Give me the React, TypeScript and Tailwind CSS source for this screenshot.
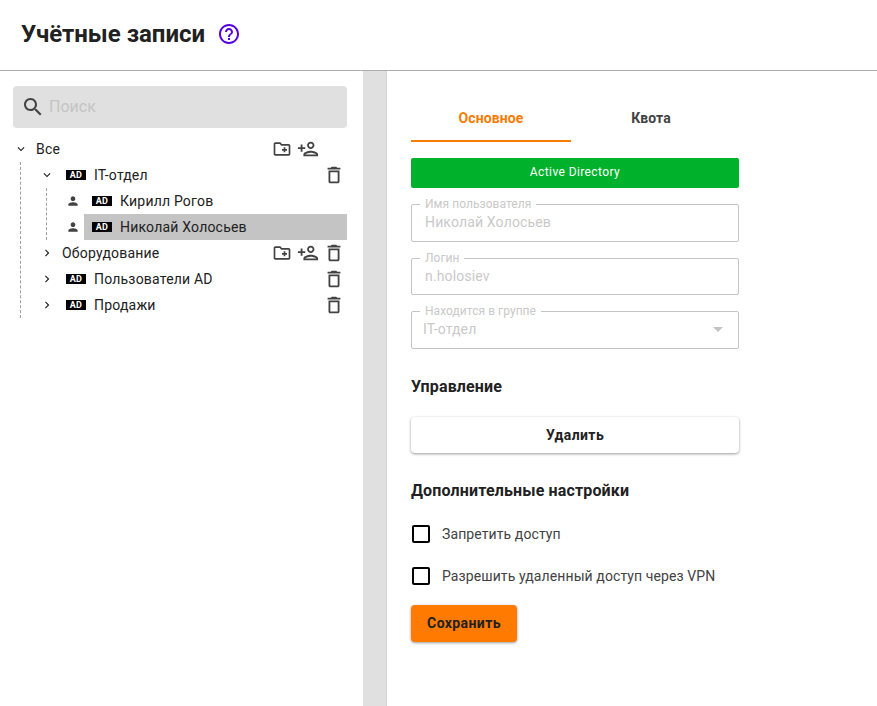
import type { ReactNode } from "react";

const paths = {
  help: "M11 18h2v-2h-2v2zm1-16C6.48 2 2 6.48 2 12s4.48 10 10 10 10-4.48 10-10S17.52 2 12 2zm0 18c-4.41 0-8-3.59-8-8s3.59-8 8-8 8 3.59 8 8-3.59 8-8 8zm0-14c-2.21 0-4 1.79-4 4h2c0-1.1.9-2 2-2s2 .9 2 2c0 2-3 1.75-3 5h2c0-2.25 3-2.5 3-5 0-2.21-1.79-4-4-4z",
  search: "M15.5 14h-.79l-.28-.27C15.41 12.59 16 11.11 16 9.5 16 5.91 13.09 3 9.5 3S3 5.91 3 9.5 5.91 16 9.5 16c1.61 0 3.09-.59 4.23-1.57l.27.28v.79l5 4.99L20.49 19l-4.99-5zm-6 0C7.01 14 5 11.99 5 9.5S7.01 5 9.5 5 14 7.01 14 9.5 11.99 14 9.5 14z",
  folder: "M20 6h-8l-2-2H4c-1.11 0-1.99.89-1.99 2L2 18c0 1.11.89 2 2 2h16c1.11 0 2-.89 2-2V8c0-1.11-.89-2-2-2zm0 12H4V6h5.17l2 2H20v10zm-8-4h2v2h2v-2h2v-2h-2v-2h-2v2h-2v2z",
  personAdd: "M15 12c2.21 0 4-1.79 4-4s-1.79-4-4-4-4 1.79-4 4 1.79 4 4 4zm0-6c1.1 0 2 .9 2 2s-.9 2-2 2-2-.9-2-2 .9-2 2-2zm0 8c-2.67 0-8 1.34-8 4v2h16v-2c0-2.66-5.33-4-8-4zm-6 4c.22-.72 3.31-2 6-2 2.7 0 5.8 1.29 6 2H9zm-3-3v-3h3v-2H6V7H4v3H1v2h3v3h2z",
  trash: "M16 9v10H8V9h8m-1.5-6h-5l-1 1H5v2h14V4h-3.5l-1-1zM18 7H6v12c0 1.1.9 2 2 2h8c1.1 0 2-.9 2-2V7z",
  person: "M12 12c2.21 0 4-1.79 4-4s-1.79-4-4-4-4 1.79-4 4 1.79 4 4 4zm0 2c-2.67 0-8 1.34-8 4v2h16v-2c0-2.66-5.33-4-8-4z",
  open: "M16.59 8.59L12 13.17 7.41 8.59 6 10l6 6 6-6z",
  closed: "M10 6L8.59 7.41 13.17 12l-4.58 4.59L10 18l6-6z",
};

function Icon({ d, className }: { d: string; className: string }) {
  return (
    <svg viewBox="0 0 24 24" fill="currentColor" className={className}>
      <path d={d} />
    </svg>
  );
}

function AdBadge() {
  return (
    <span className="flex items-center justify-center w-5 h-[10px] bg-black text-white text-[9px] leading-none font-bold tracking-[0.2px] shrink-0">
      AD
    </span>
  );
}

function RowActions({ folder, trash }: { folder?: boolean; trash?: boolean }) {
  return (
    <div className="ml-auto flex items-center text-[#424242] pr-[1px]">
      {folder && <Icon d={paths.folder} className="w-5 h-5" />}
      {folder && <Icon d={paths.personAdd} className="w-[22px] h-[22px] ml-[5px]" />}
      <div className="w-6 flex justify-center ml-[3px]">
        {trash && <Icon d={paths.trash} className="w-[22px] h-[22px]" />}
      </div>
    </div>
  );
}

function GroupRow({ name, open, ad = true, folder }: { name: string; open?: boolean; ad?: boolean; folder?: boolean }) {
  return (
    <div className="h-[26px] flex items-center pl-[19px]">
      <Icon d={open ? paths.open : paths.closed} className="w-[14px] h-[14px] text-[#212121] shrink-0" />
      {ad && <span className="ml-3"><AdBadge /></span>}
      <span className="ml-2">{name}</span>
      <RowActions folder={folder} trash />
    </div>
  );
}

function UserRow({ name, selected }: { name: string; selected?: boolean }) {
  return (
    <div className="h-[26px] flex items-center pl-[45px]">
      <Icon d={paths.person} className="w-[14px] h-[14px] text-[#424242] shrink-0" />
      <div className={`ml-1 flex-1 h-full flex items-center pl-2 ${selected ? "bg-[#c4c4c4]" : ""}`}>
        <AdBadge />
        <span className="ml-2">{name}</span>
      </div>
    </div>
  );
}

function Field({ label, short, children }: { label: string; short?: boolean; children: ReactNode }) {
  return (
    <fieldset className={`${short ? "h-[43px]" : "h-[44px]"} border border-[#c4c4c4] rounded-[2px] px-2 pt-[2px] flex items-center`}>
      <legend className="px-[5px] text-xs leading-[12px] tracking-[0.05px] text-[#c9c9c9]">{label}</legend>
      {children}
    </fieldset>
  );
}

function Check({ label }: { label: string }) {
  return (
    <label className="flex items-center h-[18px] pl-[1px]">
      <span className="w-[18px] h-[18px] border-2 border-black rounded-[2px] shrink-0" />
      <span className="ml-3 text-sm tracking-[0.1px] text-[#424242]">{label}</span>
    </label>
  );
}

export default function App() {
  return (
    <div className="h-[706px] flex flex-col bg-white text-[#212121] font-['Roboto',sans-serif] overflow-hidden">
      <header className="h-[71px] shrink-0 flex items-center pl-[21px] pb-[2px] border-b border-[#adadad]">
        <h1 className="text-2xl font-bold">Учётные записи</h1>
        <Icon d={paths.help} className="w-6 h-6 ml-3 text-[#5500e0]" />
      </header>

      <div className="flex-1 flex min-h-0">
        <aside className="w-[363px] shrink-0 pt-[15px] pl-[13px] pr-4 text-sm tracking-[0.2px]">
          <div className="h-[42px] rounded bg-[#e0e0e0] flex items-center pl-2">
            <Icon d={paths.search} className="w-6 h-6 text-[#424242]" />
            <span className="ml-1 pb-[1px] text-base tracking-normal text-[#c4c4c4]">Поиск</span>
          </div>

          <div className="mt-2">
            <div className="h-[26px] flex items-center pl-[1px]">
              <Icon d={paths.open} className="w-[14px] h-[14px] shrink-0" />
              <span className="ml-2">Все</span>
              <RowActions folder />
            </div>
            <div className="ml-[7px] border-l border-dashed border-[#9e9e9e]">
              <GroupRow name="IT-отдел" open />
              <div className="relative">
                <div className="absolute left-[25px] top-0 bottom-0 border-l border-dashed border-[#9e9e9e]" />
                <UserRow name="Кирилл Рогов" />
                <UserRow name="Николай Холосьев" selected />
              </div>
              <GroupRow name="Оборудование" ad={false} folder />
              <GroupRow name="Пользователи AD" />
              <GroupRow name="Продажи" />
            </div>
          </div>
        </aside>

        <div className="w-6 shrink-0 bg-[#e0e0e0] border-r border-[#d6d6d6]" />

        <main className="flex-1 pl-6 pt-[27px]">
          <div className="w-[328px]">
            <div className="flex w-[320px] h-[44px] text-sm font-bold tracking-[0.1px]">
              <div className="w-40 flex items-center justify-center pb-[2px] text-[#f57c00] border-b-2 border-[#f57c00]">Основное</div>
              <div className="w-40 flex items-center justify-center pb-[4px] text-[#424242]">Квота</div>
            </div>

            <div className="mt-4 h-[30px] pb-[2px] rounded-[2px] bg-[#00b12b] text-white text-xs tracking-[0.4px] flex items-center justify-center">
              Active Directory
            </div>

            <div className="mt-[10px] flex flex-col gap-[10px] text-sm tracking-[0.15px] text-[#c9c9c9]">
              <Field label="Имя пользователя"><span className="ml-[5px]">Николай Холосьев</span></Field>
              <Field label="Логин" short><span className="ml-[5px]">n.holosiev</span></Field>
              <Field label="Находится в группе">
                <span className="ml-[3px]">IT-отдел</span>
                <span className="ml-auto mr-[7px] w-0 h-0 border-x-[5px] border-x-transparent border-t-[5px] border-t-[#c4c4c4]" />
              </Field>
            </div>

            <h2 className="mt-[28px] text-base font-bold leading-[20px] tracking-[0.15px]">Управление</h2>
            <button className="mt-[20px] w-full h-9 rounded bg-white text-sm font-bold tracking-[0.4px] shadow-[0_1px_3px_rgba(0,0,0,0.4)]">Удалить</button>

            <h2 className="mt-[28px] text-base font-bold leading-[20px] tracking-[0.15px]">Дополнительные настройки</h2>
            <div className="mt-6 flex flex-col gap-6">
              <Check label="Запретить доступ" />
              <Check label="Разрешить удаленный доступ через VPN" />
            </div>
            <button className="mt-5 w-[106px] h-[37px] pb-[1px] rounded bg-[#ff7a00] text-sm font-bold tracking-[0.4px] shadow-[0_1px_3px_rgba(0,0,0,0.4)]">Сохранить</button>
          </div>
        </main>
      </div>
    </div>
  );
}
